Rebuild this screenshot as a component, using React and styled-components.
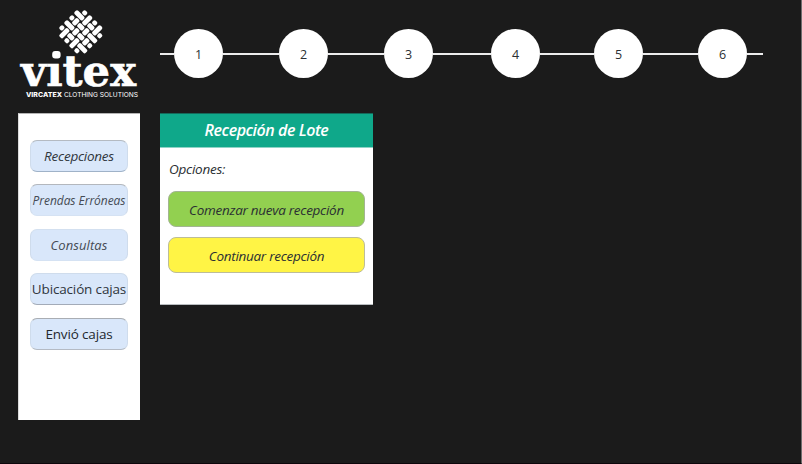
import React from "react";
import styled, { createGlobalStyle } from "styled-components";

const GlobalStyle = createGlobalStyle`
  *, *::before, *::after { box-sizing: border-box; }
  html, body { margin: 0; background: #1b1b1b; }
  body { font-family: "Open Sans", "Noto Sans", sans-serif; color: #2b2f33; }
`;

const Page = styled.div`
  width: 802px;
  height: 464px;
  overflow: hidden;
  background: #1b1b1b;
  border-right: 1px solid #6e6e6e;
  border-bottom: 1px solid #0d060b;
`;

const Header = styled.header`
  display: flex;
  height: 113px;
`;

const LogoArea = styled.div`
  width: 160px;
  flex: none;
`;

const LogoSvg = styled.svg`
  display: block;
`;

const Stepper = styled.ol`
  display: flex;
  align-items: center;
  height: 49px;
  margin: 29px 0 0;
  padding: 0;
  list-style: none;
`;

const Connector = styled.li`
  width: ${(p) => p.$length}px;
  height: 2px;
  flex: none;
  background: #ececed;
`;

const Step = styled.li`
  display: flex;
  align-items: center;
  justify-content: center;
  width: 49px;
  height: 49px;
  flex: none;
  padding-top: 2px;
  border-radius: 50%;
  background: #fff;
  font-size: 12.5px;
  line-height: 18px;
`;

const Body = styled.main`
  display: flex;
  align-items: flex-start;
  gap: 20px;
  padding-left: 18px;
`;

const Sidebar = styled.nav`
  display: flex;
  flex-direction: column;
  gap: 12.4px;
  width: 122px;
  height: 307px;
  padding: 26px 12px 0;
  background: #fff;
  border-top: 1px solid #b4b4b4;
  border-left: 1px solid #dcdcdc;
`;

const Button = styled.button`
  display: flex;
  align-items: center;
  justify-content: center;
  flex: none;
  padding: 0;
  border: 1px solid;
  font-family: inherit;
  color: inherit;
  white-space: nowrap;
`;

const NavButton = styled(Button)`
  width: 98px;
  height: 32px;
  margin-left: -1px;
  border-color: ${(p) => p.$top} #cfdcec ${(p) => p.$bottom};
  border-radius: 7px;
  background: #d9e7fa;
  font-size: ${(p) => p.$size}px;
  font-style: ${(p) => (p.$upright ? "normal" : "italic")};
  letter-spacing: ${(p) => p.$spacing}px;
  color: ${(p) => p.$ink};
`;

const Card = styled.section`
  width: 213px;
  height: 192px;
  background: #fff;
  border-bottom: 1px solid #b9bdc0;
`;

const CardTitle = styled.h1`
  display: flex;
  align-items: center;
  justify-content: center;
  height: 35px;
  margin: 0;
  padding-bottom: 1px;
  border-top: 1px solid #15695a;
  border-bottom: 1px solid #8fd3c6;
  background: #0fa88a;
  color: #fff;
  font-size: 16px;
  font-style: italic;
  font-weight: 600;
  letter-spacing: -0.45px;
`;

const CardBody = styled.div`
  display: flex;
  flex-direction: column;
  padding: 10px 8px 0;
`;

const Label = styled.p`
  margin: 0 0 11px 1px;
  height: 22px;
  font-size: 13.5px;
  font-style: italic;
  line-height: 22px;
  letter-spacing: -0.25px;
`;

const ActionButton = styled(Button)`
  width: 197px;
  height: 36px;
  margin-bottom: 10px;
  padding-top: 2px;
  border-color: ${(p) => p.$edge};
  border-radius: 8px;
  background: ${(p) => p.$fill};
  font-size: 13.5px;
  font-style: italic;
  letter-spacing: -0.28px;
`;

const PITCH = 7.07;
const THICK = 4.9;
const GAP = 0.85;
const REACH = 18.4;

/* Pieces of one strand of the plain weave that stay visible, as [start, end]. */
function strandPieces(isOver) {
  const cut = THICK / 2 + GAP;
  const pieces = [];
  let start = -REACH;
  for (let k = 0; k < 4; k += 1) {
    if (!isOver(k)) {
      const at = (k - 1.5) * PITCH;
      pieces.push([start, at - cut]);
      start = at + cut;
    }
  }
  pieces.push([start, REACH]);
  return pieces;
}

function Weave() {
  const bars = [];
  for (let i = 0; i < 4; i += 1) {
    const c = (i - 1.5) * PITCH - THICK / 2;
    strandPieces((k) => (i + k) % 2 === 0).forEach(([a, b]) =>
      bars.push(<rect key={`h${i}${a}`} x={a} y={c} width={b - a} height={THICK} rx="1.7" />)
    );
    strandPieces((k) => (i + k) % 2 === 1).forEach(([a, b]) =>
      bars.push(<rect key={`v${i}${a}`} x={c} y={a} width={THICK} height={b - a} rx="1.7" />)
    );
  }
  return <g transform="translate(80.8 31.8) rotate(45)">{bars}</g>;
}

function Logo() {
  return (
    <LogoSvg width="160" height="113" viewBox="0 0 160 113" fill="#fff" role="img" aria-label="vitex">
      <text
        x="21"
        y="85.6"
        textLength="115"
        lengthAdjust="spacingAndGlyphs"
        fontFamily="DejaVu Serif, serif"
        fontWeight="700"
        fontSize="42"
        stroke="#fff"
        strokeWidth="0.6"
      >
        vitex
      </text>
      {/* Rounded tittle set higher than the font's own */}
      <rect x="48" y="50" width="14.5" height="12" fill="#1b1b1b" />
      <rect x="52.2" y="51" width="8.4" height="7.6" rx="3" />
      <Weave />
      <text x="26" y="97" textLength="36" lengthAdjust="spacingAndGlyphs" fontFamily="Inter, sans-serif" fontWeight="800" fontSize="6.2">
        VIRCATEX
      </text>
      <text x="64" y="97" textLength="74" lengthAdjust="spacingAndGlyphs" fontFamily="Inter, sans-serif" fontSize="6.2">
        CLOTHING SOLUTIONS
      </text>
    </LogoSvg>
  );
}

const connectors = [14, 56, 56, 58, 54, 55];

const navItems = [
  { text: "Recepciones", size: 13.5, spacing: -0.25, top: "#b4bac2", bottom: "#9fb2c8", ink: "#30363d" },
  { text: "Prendas Erróneas", size: 12, spacing: -0.05, top: "#b3b7bd", bottom: "#d5e2f3", ink: "#454b54" },
  { text: "Consultas", size: 13, spacing: 0.1, top: "#d3e0f0", bottom: "#d5e2f3", ink: "#454b54" },
  { text: "Ubicación cajas", size: 13.5, spacing: -0.15, top: "#cfdcec", bottom: "#a3abb8", ink: "#30363d", upright: true },
  { text: "Envió cajas", size: 13.5, spacing: -0.15, top: "#a9adb3", bottom: "#b4bac4", ink: "#23282e", upright: true },
];

export default function App() {
  return (
    <>
      <GlobalStyle />
      <Page>
        <Header>
          <LogoArea>
            <Logo />
          </LogoArea>
          <Stepper>
            {connectors.map((length, i) => (
              <React.Fragment key={i}>
                <Connector $length={length} />
                <Step>{i + 1}</Step>
              </React.Fragment>
            ))}
            <Connector $length={16} />
          </Stepper>
        </Header>
        <Body>
          <Sidebar>
            {navItems.map((n) => (
              <NavButton
                key={n.text}
                $size={n.size}
                $spacing={n.spacing}
                $top={n.top}
                $bottom={n.bottom}
                $ink={n.ink}
                $upright={n.upright}
              >
                {n.text}
              </NavButton>
            ))}
          </Sidebar>
          <Card>
            <CardTitle>Recepción de Lote</CardTitle>
            <CardBody>
              <Label>Opciones:</Label>
              <ActionButton $fill="#92d050" $edge="#a3b592">
                Comenzar nueva recepción
              </ActionButton>
              <ActionButton $fill="#fff445" $edge="#bdbd98">
                Continuar recepción
              </ActionButton>
            </CardBody>
          </Card>
        </Body>
      </Page>
    </>
  );
}
